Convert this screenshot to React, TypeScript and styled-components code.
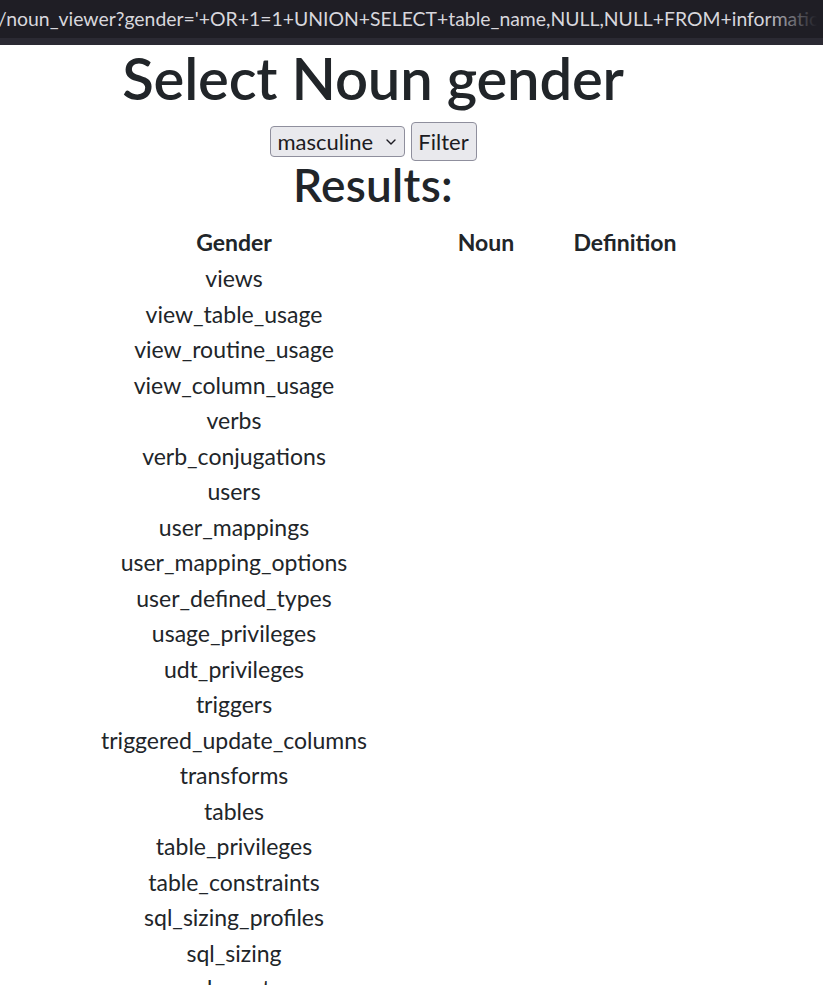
import React from 'react';
import styled, { createGlobalStyle } from 'styled-components';

const GlobalStyle = createGlobalStyle`
  html, body {
    margin: 0;
    background: #fff;
    color: #212529;
    font-family: Lato, "Open Sans", sans-serif;
  }
`;

const url =
  "/noun_viewer?gender='+OR+1=1+UNION+SELECT+table_name,NULL,NULL+FROM+information_schema.tables--";

const tables = [
  'views',
  'view_table_usage',
  'view_routine_usage',
  'view_column_usage',
  'verbs',
  'verb_conjugations',
  'users',
  'user_mappings',
  'user_mapping_options',
  'user_defined_types',
  'usage_privileges',
  'udt_privileges',
  'triggers',
  'triggered_update_columns',
  'transforms',
  'tables',
  'table_privileges',
  'table_constraints',
  'sql_sizing_profiles',
  'sql_sizing',
  'schemata',
  'sequences',
  'routines',
];

export default function App() {
  return (
    <>
      <GlobalStyle />
      <UrlBar>
        <UrlText>{url}</UrlText>
        <UrlFade />
      </UrlBar>
      <UrlStrip />
      <Page>
        <Title>Select Noun gender</Title>
        <FilterForm onSubmit={(e) => e.preventDefault()}>
          <SelectWrap>
            <GenderSelect defaultValue="masculine">
              <option value="masculine">masculine</option>
              <option value="feminine">feminine</option>
              <option value="neuter">neuter</option>
            </GenderSelect>
            <Chevron width="10" height="6" viewBox="0 0 10 6" aria-hidden="true">
              <path d="M1 1l4 4 4-4" fill="none" stroke="#1c1b22" strokeWidth="1.4" strokeLinecap="round" strokeLinejoin="round" />
            </Chevron>
          </SelectWrap>
          <FilterButton type="submit">Filter</FilterButton>
        </FilterForm>
        <Subtitle>Results:</Subtitle>
        <Results>
          <colgroup>
            <col style={{ width: 372 }} />
            <col style={{ width: 132 }} />
            <col style={{ width: 146 }} />
          </colgroup>
          <thead>
            <tr>
              <HeadCell>Gender</HeadCell>
              <HeadCell>Noun</HeadCell>
              <HeadCell>Definition</HeadCell>
            </tr>
          </thead>
          <tbody>
            {tables.map((name) => (
              <tr key={name}>
                <Cell>{name}</Cell>
                <Cell />
                <Cell />
              </tr>
            ))}
          </tbody>
        </Results>
      </Page>
    </>
  );
}

const UrlBar = styled.div`
  position: relative;
  height: 38px;
  background: #1f1e25;
  overflow: hidden;
  white-space: nowrap;
`;

const UrlText = styled.div`
  margin-left: -2px;
  font-family: Lato, sans-serif;
  font-size: 19.4px;
  line-height: 38px;
  color: #d8d7dd;
`;

const UrlFade = styled.div`
  position: absolute;
  top: 0;
  right: 0;
  width: 60px;
  height: 100%;
  background: linear-gradient(to right, rgba(31, 30, 37, 0), #1f1e25 90%);
`;

const UrlStrip = styled.div`
  height: 7px;
  background: #2b2a33;
`;

const Page = styled.main`
  width: 746px;
  text-align: center;
`;

const Title = styled.h1`
  margin: 2px 0 0;
  font-size: 58px;
  font-weight: 600;
  letter-spacing: -0.2px;
  line-height: 62px;
`;

const FilterForm = styled.form`
  display: flex;
  justify-content: center;
  align-items: center;
  gap: 6px;
  height: 39px;
  margin-top: 13px;
`;

const SelectWrap = styled.div`
  position: relative;
  display: flex;
`;

const GenderSelect = styled.select`
  appearance: none;
  width: 135px;
  height: 31px;
  padding: 0 0 0 7px;
  border: 1px solid #8f8f9d;
  border-radius: 4px;
  background: #e9e9ed;
  color: #1c1b22;
  font-family: Lato, sans-serif;
  font-size: 22px;
  text-align: left;
`;

const Chevron = styled.svg`
  position: absolute;
  right: 9px;
  top: 13px;
  pointer-events: none;
`;

const FilterButton = styled.button`
  width: 66px;
  height: 39px;
  padding: 0;
  border: 1px solid #8f8f9d;
  border-radius: 4px;
  background: #e9e9ed;
  color: #1c1b22;
  font-family: Lato, sans-serif;
  font-size: 22px;
`;

const Subtitle = styled.h2`
  margin: 0;
  font-size: 46px;
  font-weight: 600;
  letter-spacing: 0.3px;
  line-height: 48px;
`;

const Results = styled.table`
  table-layout: fixed;
  width: 650px;
  margin: 15px 0 0 48px;
  border-collapse: collapse;
`;

const HeadCell = styled.th`
  padding: 0;
  height: 36.5px;
  font-size: 23px;
  font-weight: 700;
  text-align: center;
`;

const Cell = styled.td`
  padding: 0;
  height: 35.5px;
  font-size: 23px;
  text-align: center;
`;
